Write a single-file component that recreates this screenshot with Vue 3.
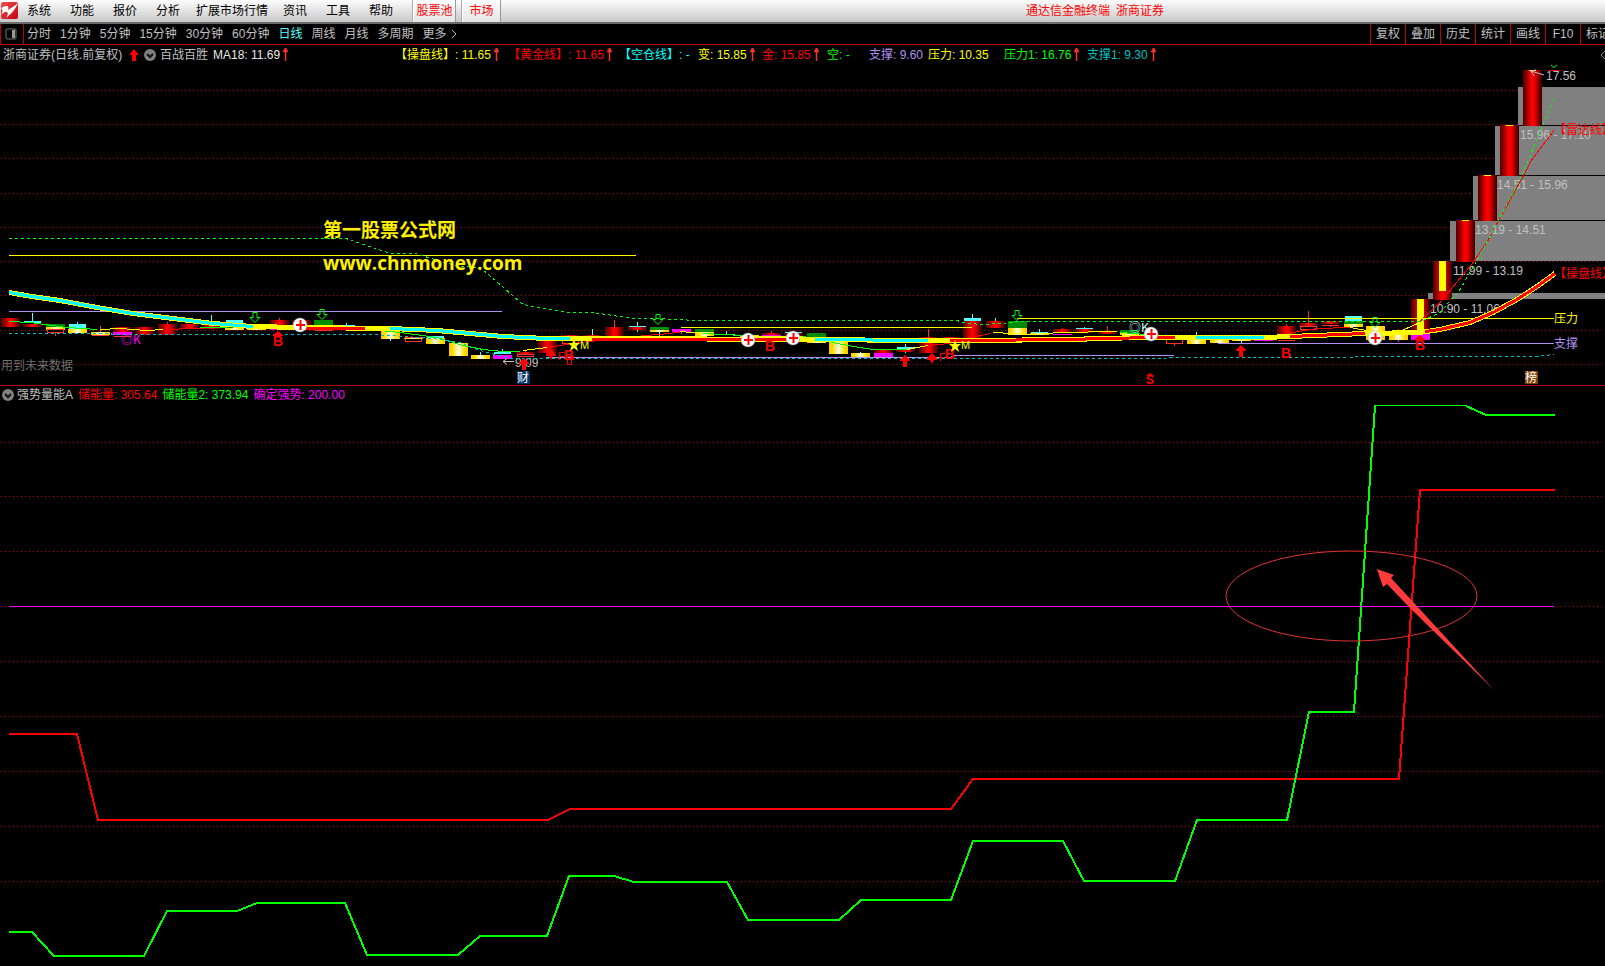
<script setup>
const menus = ['系统', '功能', '报价', '分析', '扩展市场行情', '资讯', '工具', '帮助']
const periods = ['分时', '1分钟', '5分钟', '15分钟', '30分钟', '60分钟', '日线', '周线', '月线', '多周期']
const tools = ['复权', '叠加', '历史', '统计', '画线', 'F10', '标记']

const readings = [
  { text: 'MA18: 11.69', tone: 'white', up: true },
  { text: '【操盘线】: 11.65', tone: 'yellow', up: true },
  { text: '【黄金线】: 11.65', tone: 'red', up: true },
  { text: '【空仓线】: -', tone: 'cyan', up: false },
  { text: '变: 15.85', tone: 'yellow', up: true },
  { text: '金: 15.85', tone: 'red', up: true },
  { text: '空: -', tone: 'green', up: false },
  { text: '支撑: 9.60', tone: 'violet', up: false },
  { text: '压力: 10.35', tone: 'yellow', up: false },
  { text: '压力1: 16.76', tone: 'green', up: true },
  { text: '支撑1: 9.30', tone: 'teal', up: true }
]

const priceGrid = [90, 124, 158, 193, 227, 261, 295, 330, 364]
const energyGrid = [442, 496, 551, 606, 661, 716, 771, 826, 881]

const centre = (i) => Math.round(10 + 22.38 * i)

/* [bar index, top, bottom, kind] */
const bars = [
  [0, 318, 327, 'red'], [1, 321, 323, 'cyan'], [1, 324, 327, 'red'],
  [2, 324, 327, 'green'], [2, 327, 330, 'gold'], [2, 330, 333, 'hollow'],
  [3, 324, 329, 'cyan'], [3, 329, 333, 'gold'], [4, 332, 335, 'gold'], [4, 335, 336, 'line'],
  [5, 327, 332, 'red'], [5, 332, 335, 'magenta'], [5, 336, 337, 'line'],
  [6, 327, 335, 'red'], [7, 324, 335, 'red'], [8, 324, 329, 'red'], [9, 324, 329, 'red'],
  [10, 320, 323, 'cyan'], [10, 323, 328, 'green'], [10, 328, 330, 'gold'],
  [11, 328, 330, 'gold'], [12, 320, 325, 'red'], [12, 329, 330, 'magenta'],
  [13, 320, 325, 'red'], [14, 320, 327, 'green'], [14, 330, 331, 'line'],
  [15, 325, 326, 'cyan'], [17, 330, 339, 'gold'],
  [18, 338, 342, 'hollow'], [18, 338, 339, 'gold'], [19, 336, 338, 'cyan'], [19, 338, 344, 'gold'],
  [20, 343, 356, 'gold'], [21, 355, 359, 'gold'], [22, 352, 354, 'cyan'], [22, 355, 359, 'magenta'],
  [23, 352, 355, 'red'], [23, 355, 357, 'hollow'], [24, 338, 353, 'red'],
  [25, 335, 340, 'red'], [25, 340, 344, 'hollow'], [26, 335, 336, 'red'],
  [27, 327, 337, 'red'], [28, 326, 327, 'cyan'], [28, 327, 330, 'red'],
  [29, 327, 330, 'green'], [29, 330, 332, 'gold'], [30, 329, 332, 'magenta'],
  [31, 329, 332, 'green'], [31, 332, 336, 'gold'], [32, 334, 335, 'cyan'], [33, 335, 338, 'gold'],
  [34, 333, 335, 'red'], [34, 335, 337, 'magenta'], [35, 332, 333, 'cyan'], [35, 333, 336, 'red'],
  [36, 333, 337, 'green'], [36, 337, 343, 'gold'], [37, 340, 354, 'gold'],
  [38, 353, 357, 'gold'], [39, 349, 353, 'red'], [39, 353, 357, 'magenta'],
  [40, 347, 349, 'cyan'], [40, 349, 352, 'red'], [41, 337, 353, 'red'], [42, 337, 341, 'red'],
  [43, 318, 321, 'cyan'], [43, 321, 339, 'red'], [44, 321, 328, 'red'],
  [45, 321, 328, 'green'], [45, 328, 335, 'gold'], [46, 332, 333, 'cyan'], [46, 333, 335, 'gold'],
  [47, 329, 333, 'red'], [47, 334, 335, 'magenta'], [48, 328, 329, 'cyan'], [48, 329, 333, 'red'],
  [49, 331, 334, 'red'], [50, 330, 333, 'green'], [50, 333, 335, 'gold'],
  [52, 340, 344, 'hollow'], [52, 338, 340, 'gold'], [53, 338, 344, 'gold'], [54, 340, 343, 'gold'],
  [55, 338, 341, 'gold'], [56, 337, 340, 'gold'], [56, 340, 341, 'magenta'],
  [57, 326, 336, 'red'], [57, 340, 341, 'line'], [58, 323, 327, 'red'], [58, 327, 330, 'hollow'],
  [59, 321, 324, 'red'], [59, 325, 326, 'line'],
  [60, 316, 321, 'cyan'], [60, 321, 324, 'green'], [60, 324, 327, 'gold'],
  [61, 326, 331, 'gold'], [61, 335, 340, 'gold'], [62, 335, 340, 'gold'],
  [63, 299, 334, 'red'], [63, 333, 340, 'magenta'], [63, 299, 333, 'core'],
  [64, 261, 300, 'red'], [64, 261, 291, 'core'],
  [65, 220, 262, 'red'], [65, 220, 221, 'core'], [66, 175, 221, 'red'], [66, 175, 176, 'core'],
  [67, 125, 176, 'red'], [67, 125, 126, 'core'], [68, 70, 126, 'red'], [68, 70, 71, 'core'],
  [69, 70, 71, 'red']
]
const inset = { cyan: 1, hollow: 1, line: 1, core: 6 }
const candles = bars.map(([i, top, bottom, kind]) => {
  const d = inset[kind] || 0
  return { x: centre(i) - 9 + d, y: top, w: 19 - 2 * d, h: bottom - top, kind }
})

/* [bar index, top, bottom, colour] */
const wicks = [
  [1, 313, 321, 'c'], [2, 333, 336, 'r'], [3, 322, 324, 'c'], [4, 326, 332, 'r'], [7, 322, 324, 'r'],
  [9, 315, 321, 'c'], [12, 318, 320, 'r'], [15, 323, 325, 'c'], [17, 339, 341, 'c'], [21, 352, 355, 'c'],
  [22, 349, 352, 'c'], [23, 350, 352, 'r'], [26, 329, 335, 'c'], [27, 320, 327, 'r'], [28, 322, 326, 'c'],
  [28, 330, 332, 'c'], [29, 332, 336, 'c'], [30, 332, 334, 'r'], [32, 331, 334, 'c'], [34, 331, 333, 'r'],
  [38, 352, 353, 'c'], [40, 344, 347, 'c'], [40, 352, 353, 'c'], [41, 329, 337, 'r'], [43, 314, 318, 'c'],
  [44, 318, 321, 'c'], [46, 329, 332, 'c'], [47, 328, 329, 'r'], [48, 327, 328, 'c'], [49, 326, 331, 'r'],
  [52, 344, 346, 'r'], [53, 332, 338, 'c'], [55, 341, 343, 'c'], [57, 324, 326, 'r'], [58, 311, 323, 'r'],
  [59, 326, 327, 'r'], [62, 329, 335, 'r'], [62, 340, 342, 'r']
]

const zones = [
  [1518, 87, 38], [1495, 126, 49], [1473, 176, 44], [1450, 221, 40], [1428, 293, 6]
]
const zoneLabels = [
  [1520, 139, '15.96 - 17.10'], [1497, 189, '14.51 - 15.96'], [1475, 234, '13.19 - 14.51'],
  [1453, 275, '11.99 - 13.19'], [1430, 313, '10.90 - 11.06'], [1546, 80, '17.56'], [515, 367, '9.09']
]

const maPath = '9,292 32,296 60,300 97,307 133,313 173,318 213,323 253,326 300,327 390,328 437,330 470,333 503,336 547,338 610,338 800,339 930,340 960,340 1085,339 1086,338 1160,337 1264,337 1290,336 1365,333 1420,332 1440,329 1470,322 1493,312 1517,299 1537,286 1555,273'
const maCyan = [
  '9,292 32,296 60,300 97,307 133,313 173,318 213,323 253,326',
  '390,328 437,330 470,333 503,336 547,338 570,338',
  '815,339 928,340', '1196,337 1264,337'
]
const maRed = [
  '306,328 365,328', '592,339 800,339', '950,340 1085,339 1086,338 1175,337',
  '1290,336 1365,333', '1425,331 1440,329 1470,322 1493,312 1517,299 1537,286 1555,273'
]

const thin = [
  ['green', '9,321 30,322 67,327 97,329'], ['yellow', '100,329 120,328 147,330 163,329'],
  ['red', '167,329 217,327'], ['green', '200,327 255,326'],
  ['green', '360,327 370,329 400,332 437,337 463,345 483,349 503,351 520,351'],
  ['yellow', '523,350 547,347'], ['red', '547,347 573,343 623,337 670,333 683,331'],
  ['yellow', '680,331 703,333'], ['green', '703,333 743,335'], ['yellow', '743,336 803,336'],
  ['green', '803,336 820,339 837,343 860,347 873,349 907,349'], ['yellow', '907,349 917,347 928,345'],
  ['red', '928,345 950,343 957,340 990,333'], ['yellow', '993,332 1033,334 1060,332 1117,331'],
  ['green', '1120,332 1147,334 1190,338 1227,339'], ['yellow', '1227,339 1263,338'],
  ['red', '1270,338 1293,332 1317,328 1350,327'], ['yellow', '1350,327 1372,331'],
  ['green', '1378,332 1398,333'], ['yellow', '1395,333 1420,322'],
  ['red', '1420,321 1440,302 1460,278 1473,262 1488,240 1497,223 1523,176 1532,159 1554,130'],
  ['yellow', '9,255 636,255'], ['yellow', '681,327 972,327'], ['yellow', '1017,318 1554,318'],
  ['violet', '9,311 502,311'], ['violet', '546,357 950,357 954,355 1174,355'], ['violet', '1218,343 1554,343']
]
const pressure1 = '9,238 346,238 390,253 415,253 448,263 460,266 478,267 485,271 523,304 567,312 593,312 633,318 657,318 697,320 957,320 963,322 980,324 1003,323 1017,321 1421,321 1440,312 1460,289 1473,267 1488,240 1523,173 1543,124 1554,99'
const support1 = '9,333 111,333 112,334 370,334 390,335 433,338 460,342 480,350 510,358 1163,358 1170,357 1535,356 1554,354'

const crosses = [[300, 325], [748, 340], [793, 338], [1151, 334], [1375, 338]]
const downs = [[255, 312], [322, 309], [658, 314], [1017, 310], [1375, 317]]
const ups = [[524, 358], [905, 355], [1241, 345]]
const smallUps = [[278, 331], [1420, 335]]
const diamonds = [[551, 349], [932, 353]]
const buys = [[273, 346], [765, 351], [564, 360], [945, 359], [1281, 358], [1415, 350]]
const stars = [[574, 345], [955, 346]]

const greenA = '9,932 32,932 54,956 144,956 167,911 237,911 257,903 345,903 367,955 458,955 480,936 547,936 569,876 614,876 634,882 727,882 748,920 839,920 861,900 951,900 973,841 1063,841 1084,881 1175,881 1197,820 1287,820 1309,712 1354,712 1375,406'
const energyRed = '9,734 77,734 98,820 548,820 570,809 951,809 973,779 1399,779 1420,490 1555,490'
</script>

<template>
  <div class="terminal">
    <header class="menubar">
      <svg class="logo" viewBox="0 0 17 17" aria-hidden="true">
        <defs>
          <linearGradient id="logoFill" x1="0" y1="0" x2="1" y2="1">
            <stop offset="0" stop-color="#f05050" /><stop offset="1" stop-color="#c80010" />
          </linearGradient>
        </defs>
        <rect width="17" height="17" rx="2" fill="url(#logoFill)" />
        <path d="M0 6 Q3 4 6 4 Q8 4 7 8 Q12 5 17 1 Q14 9 5 16 Q8 11 6 10 Q4 9 0 13 Q3 8 0 6Z" fill="#fff" />
      </svg>
      <nav class="menus">
        <button v-for="m in menus" :key="m" class="menu" :class="{ wide: m.length > 3 }">{{ m }}</button>
      </nav>
      <button class="tab pool">股票池</button>
      <button class="tab market">市场</button>
      <div class="title"><span>通达信金融终端</span><span>浙商证券</span></div>
    </header>

    <div class="toolbar">
      <button class="pane" aria-label="侧栏">
        <svg viewBox="0 0 12 12"><rect x="1" y="1" width="10" height="10" rx="1" fill="none" stroke="#777" /><rect x="7" y="2" width="3" height="8" fill="#999" /></svg>
      </button>
      <nav class="periods">
        <button v-for="p in periods" :key="p" :class="{ active: p === '日线' }">{{ p }}</button>
        <button class="more">更多<svg viewBox="0 0 6 10"><path d="M1 1 L5 5 L1 9" fill="none" stroke="#c0c0c0" /></svg></button>
      </nav>
      <div class="tools">
        <button v-for="t in tools" :key="t">{{ t }}</button>
      </div>
    </div>

    <section class="panel">
      <div class="legend">
        <span>浙商证券(日线.前复权)</span>
        <svg class="rise" viewBox="0 0 10 12"><path d="M5 0 L10 6 H7 V12 H3 V6 H0Z" fill="#f00" /></svg>
        <svg class="chev" viewBox="0 0 12 12"><circle cx="6" cy="6" r="6" fill="#808080" /><path d="M3 5 L6 8 L9 5" fill="none" stroke="#111" stroke-width="2" /></svg>
        <span>百战百胜</span>
        <span v-for="r in readings" :key="r.text" class="reading" :class="r.tone">{{ r.text }}<svg v-if="r.up" class="tick" viewBox="0 0 5 13"><path d="M2 2 H3 V13 H2Z M2 0 H3 L5 4 H0Z" fill="#ff3030" stroke="#ff3030" stroke-width=".5" /></svg></span>
        <svg class="dia" viewBox="0 0 8 8"><path d="M4 0 L8 4 L4 8 L0 4Z" fill="none" stroke="#888" /></svg>
      </div>
      <svg class="chart" viewBox="0 64 1605 321" role="img" aria-label="百战百胜">
        <defs>
          <linearGradient id="redBody">
            <stop offset="0" stop-color="#500000" /><stop offset=".25" stop-color="#a80000" /><stop offset=".45" stop-color="#ff0000" /><stop offset=".6" stop-color="#f00000" /><stop offset=".85" stop-color="#780000" /><stop offset="1" stop-color="#380000" />
          </linearGradient>
          <linearGradient id="goldBody">
            <stop offset="0" stop-color="#ffc800" /><stop offset=".2" stop-color="#ffe000" /><stop offset=".5" stop-color="#fffff0" /><stop offset=".8" stop-color="#ffe000" /><stop offset="1" stop-color="#ffc800" />
          </linearGradient>
        </defs>

        <g class="grid">
          <line v-for="y in priceGrid" :key="y" x1="1" x2="1605" :y1="y + 0.5" :y2="y + 0.5" />
        </g>
        <g class="crisp">
          <rect v-for="z in zones" :key="z[1]" :x="z[0]" :y="z[1]" :width="1605 - z[0]" :height="z[2]" fill="#808080" />
          <rect v-for="(w, n) in wicks" :key="'w' + n" :x="centre(w[0])" :y="w[1]" width="1" :height="w[2] - w[1]" :fill="w[3] === 'c' ? '#50ffff' : '#ff3030'" />
          <rect v-for="(c, n) in candles" :key="'c' + n" :class="c.kind" :x="c.kind === 'hollow' ? c.x + 0.5 : c.x" :y="c.kind === 'hollow' ? c.y - 0.5 : c.y" :width="c.kind === 'hollow' ? c.w - 1 : c.w" :height="c.h" />
        </g>

        <text v-for="l in zoneLabels" :key="l[2]" class="price" :x="l[0]" :y="l[1]">{{ l[2] }}</text>

        <g class="lines" transform="translate(0 .5)">
          <polyline v-for="(t, n) in thin" :key="'t' + n" :class="t[0]" :points="t[1]" />
          <polyline class="green dash" :points="pressure1" />
          <polyline class="teal dash" :points="support1" />
          <polyline class="yellow ma" :points="maPath" />
          <polyline v-for="m in maCyan" :key="m" class="cyan inner" :points="m" />
          <polyline v-for="m in maRed" :key="m" class="red inner" :points="m" />
        </g>

        <g v-for="d in downs" :key="'d' + d[0]" :transform="`translate(${d[0]} ${d[1]})`">
          <path d="M-2 0.5 H2 V5.5 H5 L0 10.5 L-5 5.5 H-2Z" fill="none" stroke="#00ff00" />
        </g>
        <g v-for="u in ups" :key="'u' + u[0]" :transform="`translate(${u[0]} ${u[1]})`">
          <path d="M0 0 L5 5 V6 H2 V12 H-2 V6 H-5 V5Z" fill="#f00" />
        </g>
        <path v-for="u in smallUps" :key="'s' + u[0]" d="M0 0 L5 4 V5 H-5 V4Z" :transform="`translate(${u[0]} ${u[1]})`" fill="#f00" />
        <g v-for="u in diamonds" :key="'m' + u[0]" :transform="`translate(${u[0]} ${u[1]})`">
          <path d="M0 0 L5 5 V7 H2 L0 11 L-2 7 H-5 V5Z" fill="#f00" />
        </g>
        <text v-for="b in buys" :key="'b' + b[0]" class="buy" :x="b[0]" :y="b[1]">B</text>
        <text class="mark red" x="558" y="360">F</text>
        <text class="mark red" x="939" y="361">F</text>
        <path d="M567.500 356.500 H573.500 V359.500 H571.500 V364.500 H567.500Z" fill="none" stroke="#f00" />
        <g v-for="s in stars" :key="'s' + s[0]" :transform="`translate(${s[0]} ${s[1]})`">
          <path d="M0 -6 L1.500 -2 H6 L2.500 1 L4 6 L0 3 L-4 6 L-2.500 1 L-6 -2 H-1.500Z" fill="#ff0" />
        </g>
        <text class="mark yellow" x="580" y="349">M</text>
        <text class="mark yellow" x="961" y="349">M</text>
        <text class="ok magenta" x="121" y="344">◎K</text>
        <text class="ok pale" x="1129" y="332">◎K</text>
        <g v-for="c in crosses" :key="'x' + c[0]" :transform="`translate(${c[0]} ${c[1]})`">
          <circle r="7" fill="#fff" stroke="#999" stroke-width=".5" />
          <path d="M-4 0 H5 M.500 -5 V5" stroke="#f00" stroke-width="2" />
        </g>
        <path d="M1146 376 L1150 373 L1154 376Z" fill="#f00" />
        <text class="sell" x="1146" y="384">S</text>
        <path d="M514 361.500 H503 M507 358.500 L503 361.500 L507 364.500" fill="none" stroke="#c0c0c0" />
        <path d="M1544 75 L1531 71 M1536 70 L1531 71 L1534 76" fill="none" stroke="#c0c0c0" />
        <path d="M1551 65 L1554 67.500 L1557 65" fill="none" stroke="#00ff00" />

        <rect x="517" y="371" width="13" height="13" fill="#003366" />
        <text class="badge" x="517" y="382">财</text>
        <rect x="1525" y="371" width="13" height="13" fill="#804000" />
        <text class="badge" x="1525" y="382">榜</text>

        <text class="cn red" x="1554" y="134">【雷达线】</text>
        <text class="cn red" x="1554" y="278">【操盘线】</text>
        <text class="cn yellow" x="1554" y="323">压力</text>
        <text class="cn violet" x="1554" y="348">支撑</text>
        <text class="cn dim" x="1" y="370">用到未来数据</text>
        <text class="watermark" x="323" y="237">第一股票公式网</text>
        <text class="watermark" x="323" y="270">www.chnmoney.com</text>
      </svg>
    </section>

    <section class="panel energy">
      <div class="legend2">
        <svg class="chev" viewBox="0 0 12 12"><circle cx="6" cy="6" r="6" fill="#808080" /><path d="M3 5 L6 8 L9 5" fill="none" stroke="#111" stroke-width="2" /></svg>
        <span>强势量能A</span>
        <span class="red">储能量: 305.64</span>
        <span class="green">储能量2: 373.94</span>
        <span class="magenta">确定强势: 200.00</span>
      </div>
      <svg class="chart" viewBox="0 404 1605 562" role="img" aria-label="强势量能A">
        <g class="grid">
          <line v-for="y in energyGrid" :key="y" x1="1" x2="1605" :y1="y + 0.5" :y2="y + 0.5" />
        </g>
        <g class="lines">
          <polyline class="red bold" :points="energyRed" />
          <polyline class="green bold" :points="greenA" />
          <polyline class="green" points="1374,405.500 1466,405.500" />
          <polyline class="green bold" points="1466,406 1486,415 1555,415" />
          <polyline class="magenta" points="9,606.500 1554,606.500" />
        </g>
        <ellipse cx="1351.500" cy="596" rx="125.500" ry="45" fill="none" stroke="#e03434" />
        <path d="M1377 569 L1394 575 L1391 578 L1415 604 L1494 690 L1411 609 L1387 584 L1383 587Z" fill="#ff3b3b" />
      </svg>
    </section>
  </div>
</template>

<style>
body { background: #000; overflow-x: hidden; }
</style>

<style scoped>
.terminal { background: #000; color: #c0c0c0; font: 12px/16px "Liberation Sans", "Noto Sans CJK SC", sans-serif; overflow: hidden; }
button { font: inherit; color: inherit; background: none; border: 0; padding: 0; white-space: nowrap; }
svg { display: block; flex: none; }

.menubar { display: flex; height: 24px; box-sizing: border-box; background: linear-gradient(#fdfdfd, #c8c8c8); border-bottom: 2px solid #6c6c6c; color: #000; }
.logo { width: 17px; height: 17px; margin: 2px 0 0 1px; }
.menus { display: flex; }
.menu { padding: 0 10px 0 9px; }
.menu.wide { padding: 0 6px; }
.tab { box-sizing: border-box; color: #f00; background: linear-gradient(#fff, #e4e4e4); border-left: 1px solid #fff; border-right: 1px solid #999; box-shadow: -1px 0 #aaa; }
.pool { width: 43px; margin-left: 10px; }
.market { width: 39px; margin-left: 6px; }
.title { flex: 1; display: flex; gap: 6px; align-items: center; color: #f00; white-space: nowrap; }
.title::before { content: ""; width: 47%; }

.toolbar { display: flex; height: 21px; box-sizing: border-box; border-bottom: 1px solid #c00000; border-left: 1px solid #c00000; }
.pane { width: 23px; box-sizing: border-box; padding-left: 4px; border-right: 1px solid #c00000; }
.pane svg { width: 12px; height: 12px; }
.periods { display: flex; gap: 9px; padding-left: 3px; }
.active { color: #50ffff; }
.more { display: flex; align-items: center; gap: 4px; }
.more svg { width: 6px; height: 10px; }
.tools { display: flex; width: 235px; overflow: hidden; margin-left: auto; flex: none; }
.tools button { width: 35px; flex: none; box-sizing: border-box; border-left: 1px solid #c00000; }

.legend { display: grid; grid-template-columns: 126px 15px 16px 53px 182px 113px 111px 79px 64px 65px 42px 59px 76px 83px 1fr 4px; align-items: center; height: 19px; padding-left: 3px; white-space: nowrap; }
.reading { display: flex; align-items: center; gap: 3px; }
.rise { width: 10px; height: 12px; }
.chev { width: 12px; height: 12px; }
.tick { width: 5px; height: 13px; }
.dia { width: 8px; height: 8px; }
.energy { border-top: 1px solid #b00000; }
.legend2 { display: flex; align-items: center; gap: 5px; height: 18px; padding-left: 2px; white-space: nowrap; }
.legend2 .chev { margin-right: -2px; }
.chart { width: 100%; height: auto; }

.white { color: #e8e8e8; fill: #e8e8e8; }
.yellow { color: #ffff00; fill: #ffff00; stroke: #ffff00; }
.red { color: #ff0000; fill: #ff0000; stroke: #ff0000; }
.green { color: #00ff00; fill: #00ff00; stroke: #00ff00; }
.cyan { color: #00ffff; fill: #00ffff; stroke: #00ffff; }
.magenta { color: #ff00ff; fill: #ff00ff; stroke: #ff00ff; }
.violet { color: #b090f0; fill: #b090f0; stroke: #b090f0; }
.teal { color: #00c0c0; fill: #00c0c0; stroke: #00c0c0; }
.pale { fill: #c0ffff; }

.grid line { stroke: #b00000; stroke-dasharray: 1 3; shape-rendering: crispEdges; }
.crisp rect { shape-rendering: crispEdges; stroke: none; }
.crisp .red { fill: url(#redBody); }
.crisp .gold { fill: url(#goldBody); }
.crisp .green { fill: #008c00; }
.crisp .cyan { fill: #50ffff; }
.crisp .line { fill: #ff3030; }
.crisp .core { fill: #ffff00; }
.crisp .hollow { fill: #000; stroke: #ff3030; }
.lines polyline { fill: none; stroke-width: 1; shape-rendering: crispEdges; }
.lines .dash { stroke-dasharray: 3 3; }
.lines .ma { stroke-width: 5; }
.lines .inner { stroke-width: 3; }
.lines .bold { stroke-width: 2; }

.chart text { stroke: none; }
.price { fill: #c0c0c0; font-size: 12px; }
.cn, .badge { font-size: 12px; }
.badge { fill: #fff; }
.dim { fill: #707070; }
.buy { fill: #f00; font-size: 14px; font-weight: bold; }
.mark { font-size: 11px; }
.sell { fill: #f00; font-size: 12px; font-weight: bold; }
.ok { font-size: 12px; font-family: "Noto Sans CJK SC", sans-serif; }
.watermark { fill: #fff000; font: bold 19px "Open Sans", "Noto Sans CJK SC", sans-serif; }
</style>
